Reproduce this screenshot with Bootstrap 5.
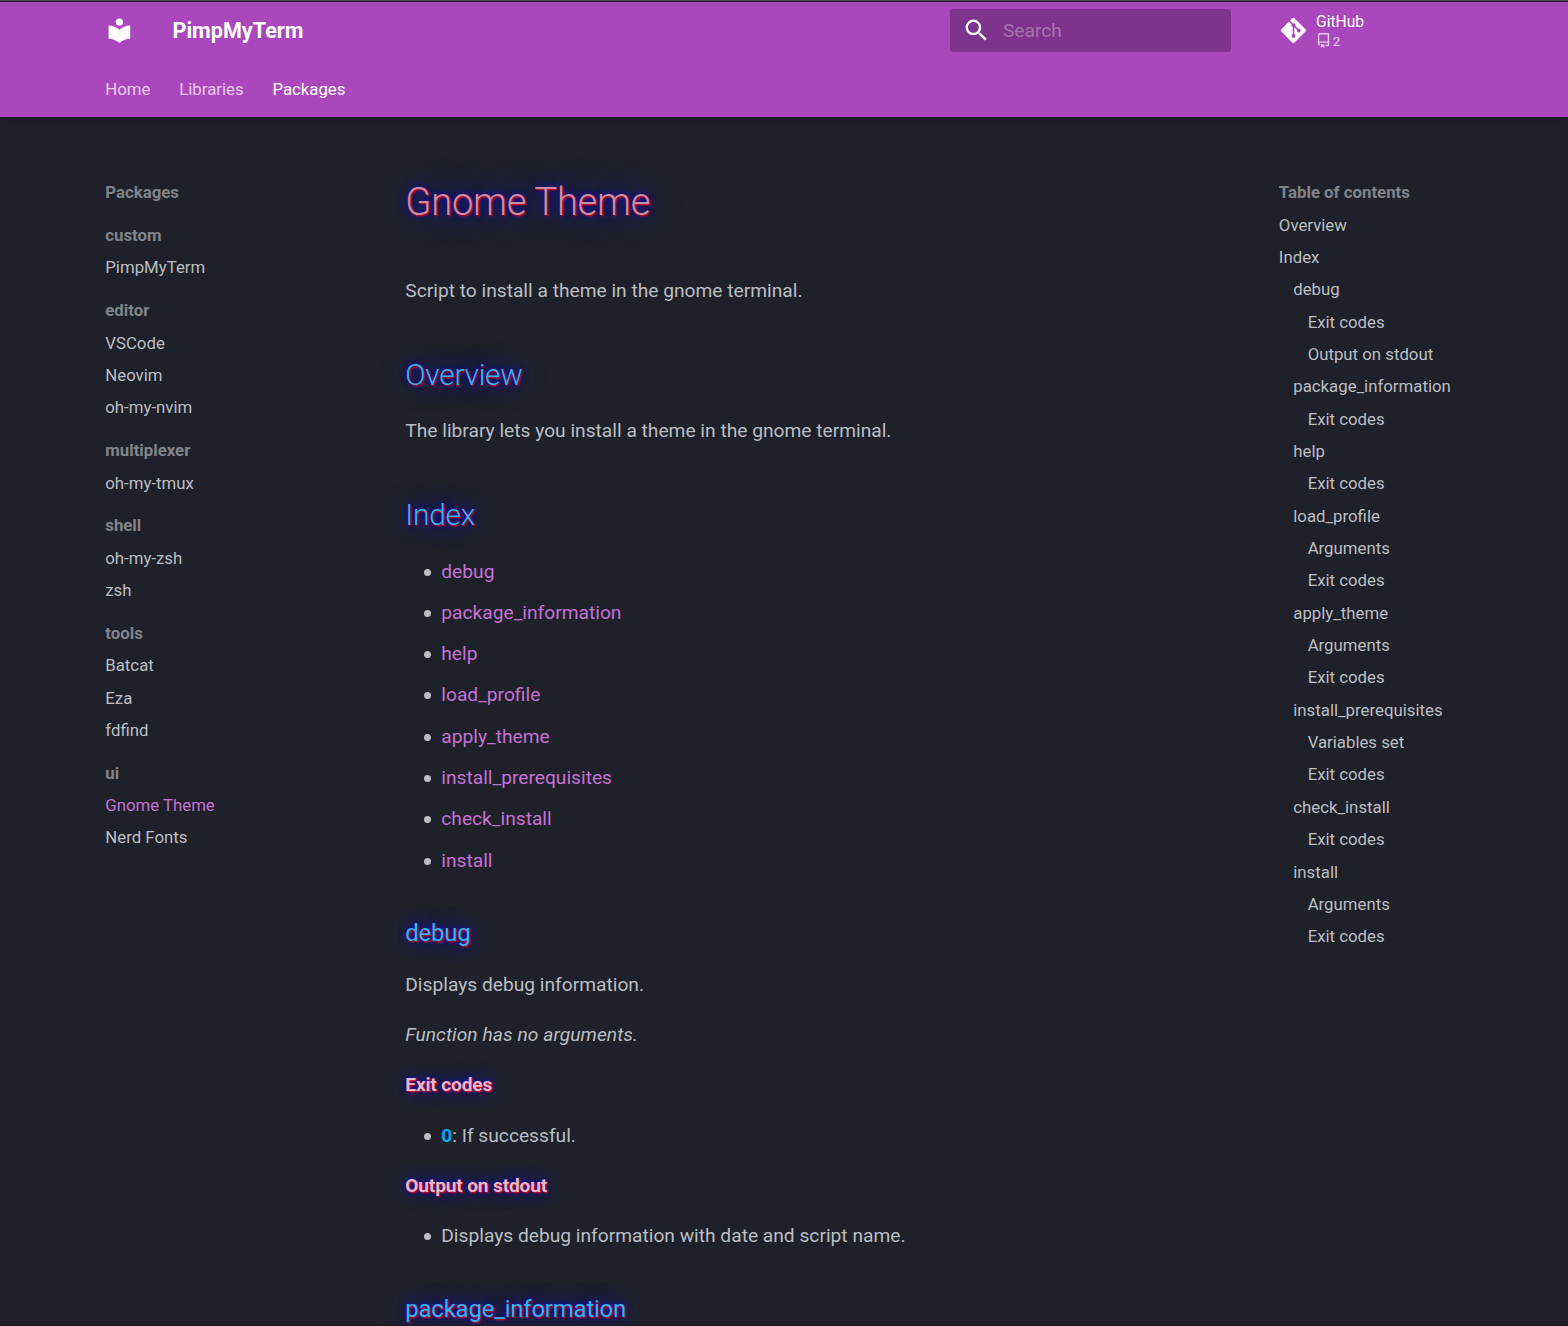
<!DOCTYPE html>
<html lang="en">
<head>
<meta charset="utf-8">
<meta name="viewport" content="width=device-width, initial-scale=1">
<title>Gnome Theme - PimpMyTerm</title>
<link href="https://cdn.jsdelivr.net/npm/bootstrap@5.3.0/dist/css/bootstrap.min.css" rel="stylesheet">
<style>
  body { font-family: Roboto, "Liberation Sans", sans-serif; background: #1e2129; color: #bcbec4; font-size: 19.2px; line-height: 1.6; height: 1326px; overflow: hidden; border-top: 1px solid #4a4a4a; border-bottom: 1px solid #17181d; }
  a { text-decoration: none; color: inherit; }
  .site-header { background: #ab47bd; color: #fff; border-top: 1px solid #1c1a20; box-shadow: 0 0 4.8px rgba(0,0,0,.1), 0 4.8px 9.6px rgba(0,0,0,.12); height: 116px; }
  .site-grid { width: 1464px; margin-left: 90.9px; flex-shrink: 0; }
  .top-bar { height: 57.6px; }
  .logo { margin: 0 4.8px; padding: 9.6px; line-height: 0; }
  .logo svg { width: 28.8px; height: 28.8px; }
  .site-title { font-size: 21.6px; line-height: 57.6px; font-weight: 700; margin-left: 24px; }
  .search-box { width: 280.8px; height: 43.2px; background: rgba(0,0,0,.26); border-radius: 2.4px; color: rgba(255,255,255,.32); }
  .search-box svg { width: 28.8px; height: 28.8px; margin: 0 12px; color: #fff; }
  .search-box span { padding-top: 1px; }
  .repo { width: 276px; margin-left: 48px; font-size: 15.6px; line-height: 18px; }
  .repo-logo { width: 28.8px; height: 28.8px; margin-right: 8.4px; }
  .repo-text { padding-top: 3px; }
  .repo-facts { font-size: 13.2px; line-height: 21px; opacity: .7; gap: 1.6px; }
  .repo-facts svg { margin-bottom: 2px; }
  .tabs { height: 57.6px; padding-left: 14.4px; gap: 28.8px; font-size: 16.8px; line-height: 21.84px; padding-top: 19.2px; }
  .tabs a { opacity: .7; }
  .tabs a.active { opacity: 1; }
  .page-row { padding-top: 36.5px; }
  .side { width: 290.4px; padding: 28.8px 14.4px 0; font-size: 16.8px; line-height: 21.84px; flex-shrink: 0; }
  .side li { margin-top: 10.5px; color: #bcbec4; }
  .side .head { font-weight: 700; color: #82848b; }
  .side .group { margin-top: 21px; }
  .side .title { font-weight: 700; color: #82848b; }
  .side .active { color: #c671d6; }
  .toc ul { padding-left: 14.4px !important; }
  .doc { width: 883.2px; padding: 23.5px 24px 0; }
  .doc h1, .doc h2, .doc h3, .doc h4 { letter-spacing: -.01em; text-shadow: 1px 1px 2px red, 0 0 .9em rgba(20,22,255,.8), 0 0 .2em blue; }
  .doc h1 { font-size: 38.4px; font-weight: 300; line-height: 1.3; margin: 0 0 49px; color: #c58fa6; }
  .doc h2 { font-size: 30px; font-weight: 300; line-height: 1.4; margin: 47.6px 0 19.5px; color: #29b6f6; }
  .doc h3 { font-size: 24px; font-weight: 400; line-height: 1.5; margin: 38.4px 0 19.2px; color: #29b6f6; }
  .doc h4 { font-size: 19.2px; font-weight: 700; line-height: 1.6; margin: 19.2px 0; color: #e4b9ca; }
  .doc p { margin: 19.2px 0; }
  .doc em { letter-spacing: .07px; }
  .doc ul { margin: 19.2px 0 19.2px 12px; padding: 0; list-style: none; }
  .doc li { margin: 0 0 9.6px 24px; line-height: 31.7px; }
  .doc li::before { content: ""; display: inline-block; width: 7px; height: 7px; border-radius: 50%; background: #bcbec4; margin: 0 10px 0 -17px; vertical-align: 2px; }
  .doc li:last-child { margin-bottom: 0; }
  .doc li a { color: #c671d6; }
  .doc li strong { color: #03a9f4; }
</style>
</head>
<body>
<header class="site-header position-relative">
  <div class="site-grid">
    <div class="top-bar d-flex align-items-center">
      <a class="logo" href="#" aria-label="PimpMyTerm"><svg viewBox="0 0 24 24" fill="currentColor"><path d="M12 8a3 3 0 0 0 3-3 3 3 0 0 0-3-3 3 3 0 0 0-3 3 3 3 0 0 0 3 3m0 3.54C9.64 9.35 6.5 8 3 8v11c3.5 0 6.64 1.35 9 3.54 2.36-2.19 5.5-3.54 9-3.54V8c-3.5 0-6.64 1.35-9 3.54Z"/></svg></a>
      <div class="site-title flex-grow-1">PimpMyTerm</div>
      <div class="search-box d-flex align-items-center"><svg viewBox="0 0 24 24" fill="currentColor"><path d="M9.5 3A6.5 6.5 0 0 1 16 9.5c0 1.61-.59 3.09-1.56 4.23l.27.27h.79l5 5-1.5 1.5-5-5v-.79l-.27-.27A6.516 6.516 0 0 1 9.5 16 6.5 6.5 0 0 1 3 9.5 6.5 6.5 0 0 1 9.5 3m0 2C7 5 5 7 5 9.5S7 14 9.5 14 14 12 14 9.5 12 5 9.5 5Z"/></svg><span>Search</span></div>
      <a class="repo d-flex align-items-center" href="#">
        <svg class="repo-logo" viewBox="-32 0 512 512" fill="currentColor"><path d="M439.55 236.05 244 40.45a28.87 28.87 0 0 0-40.81 0l-40.66 40.63 51.52 51.52c27.06-9.14 52.68 16.77 43.39 43.68l49.66 49.66c34.23-11.8 61.18 31 35.47 56.69-26.49 26.49-70.21-2.87-56-37.34L240.22 199v121.85c25.3 12.54 22.26 41.85 9.08 55a34.34 34.34 0 0 1-48.55 0c-17.57-17.6-11.07-46.91 11.25-56v-123c-20.8-8.51-24.6-30.74-18.64-45L142.57 101 8.45 235.14a28.86 28.86 0 0 0 0 40.81l195.61 195.6a28.86 28.86 0 0 0 40.8 0l194.69-194.69a28.86 28.86 0 0 0 0-40.81z"/></svg>
        <div class="repo-text"><div>GitHub</div>
        <div class="repo-facts d-flex align-items-center"><svg width="15" height="15" viewBox="0 0 16 16" fill="currentColor"><path fill-rule="evenodd" d="M2 2.5A2.5 2.5 0 0 1 4.5 0h8.75a.75.75 0 0 1 .75.75v12.5a.75.75 0 0 1-.75.75h-2.5a.75.75 0 0 1 0-1.5h1.75v-2h-8a1 1 0 0 0-.714 1.7.75.75 0 1 1-1.072 1.05A2.495 2.495 0 0 1 2 11.5Zm10.5-1h-8a1 1 0 0 0-1 1v6.708A2.486 2.486 0 0 1 4.5 9h8ZM5 12.25a.25.25 0 0 1 .25-.25h3.5a.25.25 0 0 1 .25.25v3.25a.25.25 0 0 1-.4.2l-1.45-1.087a.249.249 0 0 0-.3 0L5.4 15.7a.25.25 0 0 1-.4-.2Z"/></svg><span>2</span></div></div>
      </a>
    </div>
    <nav class="tabs d-flex"><a href="#">Home</a><a href="#">Libraries</a><a href="#" class="active">Packages</a></nav>
  </div>
</header>
<div class="site-grid page-row d-flex">
  <nav class="side">
    <div class="head">Packages</div>
    <ul class="list-unstyled mb-0">
      <li class="group title">custom</li><li>PimpMyTerm</li>
      <li class="group title">editor</li><li>VSCode</li><li>Neovim</li><li>oh-my-nvim</li>
      <li class="group title">multiplexer</li><li>oh-my-tmux</li>
      <li class="group title">shell</li><li>oh-my-zsh</li><li>zsh</li>
      <li class="group title">tools</li><li>Batcat</li><li>Eza</li><li>fdfind</li>
      <li class="group title">ui</li><li class="active">Gnome Theme</li><li>Nerd Fonts</li>
    </ul>
  </nav>
  <main class="doc">
    <h1>Gnome Theme</h1>
    <p>Script to install a theme in the gnome terminal.</p>
    <h2>Overview</h2>
    <p>The library lets you install a theme in the gnome terminal.</p>
    <h2>Index</h2>
    <ul>
      <li><a href="#">debug</a></li>
      <li><a href="#">package_information</a></li>
      <li><a href="#">help</a></li>
      <li><a href="#">load_profile</a></li>
      <li><a href="#">apply_theme</a></li>
      <li><a href="#">install_prerequisites</a></li>
      <li><a href="#">check_install</a></li>
      <li><a href="#">install</a></li>
    </ul>
    <h3>debug</h3>
    <p>Displays debug information.</p>
    <p><em>Function has no arguments.</em></p>
    <h4>Exit codes</h4>
    <ul><li><strong>0</strong>: If successful.</li></ul>
    <h4>Output on stdout</h4>
    <ul><li>Displays debug information with date and script name.</li></ul>
    <h3>package_information</h3>
  </main>
  <nav class="side toc">
    <div class="head">Table of contents</div>
    <div><ol class="list-unstyled mb-0">
      <li>Overview</li>
      <li>Index
        <ul class="list-unstyled">
          <li>debug<ul class="list-unstyled"><li>Exit codes</li><li>Output on stdout</li></ul></li>
          <li>package_information<ul class="list-unstyled"><li>Exit codes</li></ul></li>
          <li>help<ul class="list-unstyled"><li>Exit codes</li></ul></li>
          <li>load_profile<ul class="list-unstyled"><li>Arguments</li><li>Exit codes</li></ul></li>
          <li>apply_theme<ul class="list-unstyled"><li>Arguments</li><li>Exit codes</li></ul></li>
          <li>install_prerequisites<ul class="list-unstyled"><li>Variables set</li><li>Exit codes</li></ul></li>
          <li>check_install<ul class="list-unstyled"><li>Exit codes</li></ul></li>
          <li>install<ul class="list-unstyled"><li>Arguments</li><li>Exit codes</li></ul></li>
        </ul>
      </li>
    </ol></div>
  </nav>
</div>
<script src="https://cdn.jsdelivr.net/npm/bootstrap@5.3.0/dist/js/bootstrap.bundle.min.js"></script>
</body>
</html>
